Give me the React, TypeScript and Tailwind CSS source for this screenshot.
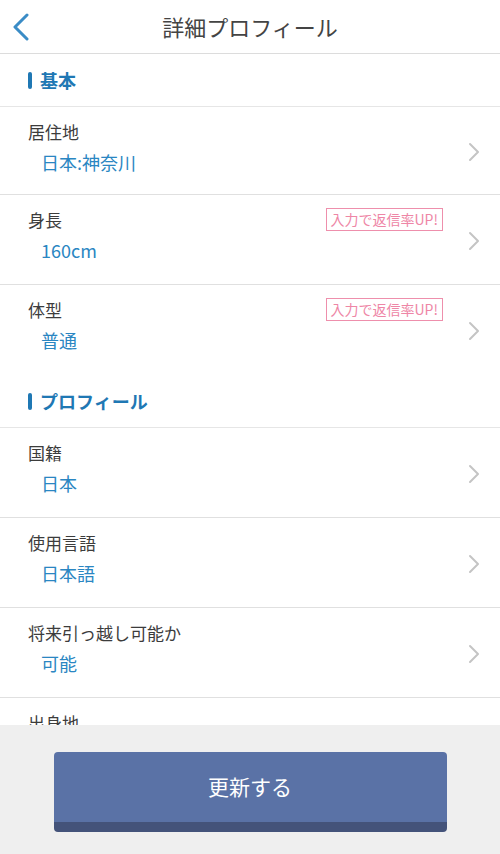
const FONT = '"Noto Sans CJK JP", "Noto Sans", sans-serif'

type Item = { label: string; value: string; badge?: boolean; h?: string }

const basic: Item[] = [
  { label: '居住地', value: '日本:神奈川', h: 'h-[88px]' },
  { label: '身長', value: '160cm', badge: true },
  { label: '体型', value: '普通', badge: true },
]

const profile: Item[] = [
  { label: '国籍', value: '日本' },
  { label: '使用言語', value: '日本語' },
  { label: '将来引っ越し可能か', value: '可能' },
  { label: '出身地', value: '神奈川' },
]

function Chevron() {
  return (
    <svg width="12" height="20" viewBox="0 0 12 20" fill="none">
      <path d="M2 2l8 8-8 8" stroke="#c4c4c4" strokeWidth="2" strokeLinecap="round" strokeLinejoin="round" />
    </svg>
  )
}

function SectionTitle({ title }: { title: string }) {
  return (
    <div className="flex h-[53px] shrink-0 items-center border-b border-[#e6e6e6] pl-[28px]">
      <span className="mr-[8px] h-[17px] w-[4px] rounded-sm bg-[#1f78b4]" />
      <span className="text-[18px] font-bold text-[#1f78b4]">{title}</span>
    </div>
  )
}

function Row({ item, last }: { item: Item; last?: boolean }) {
  return (
    <div
      className={`relative flex ${item.h ?? 'h-[90px]'} shrink-0 items-center ${last ? '' : 'border-b border-[#e0e0e0]'}`}
    >
      <div className="flex flex-1 flex-col self-start pl-[28px] pt-[12px]">
        <span className="text-[17px] leading-[26px] text-[#3c3c3c]">{item.label}</span>
        <span className="mt-[4px] pl-[13px] text-[18px] leading-[26px] text-[#2a86c2]">{item.value}</span>
      </div>
      {item.badge && (
        <span className="absolute right-[57px] top-[13px] border border-[#ee8fac] px-[4px] text-[14px] leading-[21px] text-[#ee86a6]">
          入力で返信率UP!
        </span>
      )}
      <div className="pr-[20px] pt-[2px]">
        <Chevron />
      </div>
    </div>
  )
}

export default function App() {
  return (
    <div className="flex h-[854px] w-[500px] flex-col overflow-hidden bg-white" style={{ fontFamily: FONT }}>
      <header className="relative flex h-[54px] shrink-0 items-center justify-center border-b border-[#dcdcdc]">
        <button className="absolute left-[10px] top-[11px] p-[2px]">
          <svg width="18" height="28" viewBox="0 0 18 28" fill="none">
            <path d="M15 2L3 14l12 12" stroke="#3a8cc6" strokeWidth="3" strokeLinecap="round" strokeLinejoin="round" />
          </svg>
        </button>
        <h1 className="text-[22px] text-[#444444]">詳細プロフィール</h1>
      </header>

      <div className="flex min-h-0 flex-1 flex-col overflow-hidden">
        <SectionTitle title="基本" />
        {basic.map((item, i) => (
          <Row key={item.label} item={item} last={i === basic.length - 1} />
        ))}
        <SectionTitle title="プロフィール" />
        {profile.map((item) => (
          <Row key={item.label} item={item} />
        ))}
      </div>

      <footer className="flex h-[129px] shrink-0 items-start justify-center bg-[#efefef] pt-[27px]">
        <button className="flex h-[80px] w-[393px] items-center justify-center rounded-[4px] border-b-[10px] border-[#44537a] bg-[#5a72a6] text-[21px] text-white">
          更新する
        </button>
      </footer>
    </div>
  )
}
